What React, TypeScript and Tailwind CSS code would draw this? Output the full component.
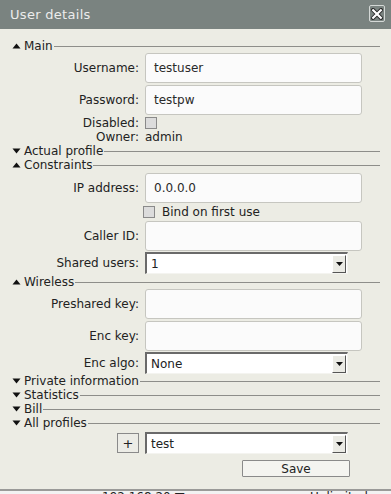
import type { ReactNode } from "react";

function Tri({ open }: { open: boolean }) {
  return open ? (
    <svg width="9" height="6" viewBox="0 0 9 6" className="shrink-0">
      <polygon points="0.5,5.5 4.5,0.5 8.5,5.5" fill="#111" />
    </svg>
  ) : (
    <svg width="9" height="6" viewBox="0 0 9 6" className="shrink-0">
      <polygon points="0.5,0.5 8.5,0.5 4.5,5.5" fill="#111" />
    </svg>
  );
}

function Section({ title, open }: { title: string; open: boolean }) {
  return (
    <div className="flex h-[14px] items-center pl-3 pr-[11px]">
      <Tri open={open} />
      <span className="ml-[3px] leading-none">{title}</span>
      <div className="ml-[1px] h-0 flex-1 border-t border-[#8e8e8a]" />
    </div>
  );
}

function Row({ label, children, h = "h-[30px]" }: { label: string; children: ReactNode; h?: string }) {
  return (
    <div className={`flex items-center ${h}`}>
      <div className="w-[139px] shrink-0 text-right leading-none">{label}</div>
      <div className="ml-[6px] flex h-full items-center">{children}</div>
    </div>
  );
}

function Input({ value }: { value?: string }) {
  return (
    <div className="flex h-full w-[217px] items-center rounded-[3px] border border-[#c6c6c0] bg-[#fbfbfb] pl-2 text-[#2a2a2a]">
      {value}
    </div>
  );
}

function Select({ value, w = "w-[203px]" }: { value: string; w?: string }) {
  return (
    <div className={`flex h-[22px] ${w} items-center border-t-2 border-l-2 border-t-[#6a6a6a] border-l-[#6a6a6a] border-b border-r border-b-[#f4f4f0] border-r-[#f4f4f0] bg-white`}>
      <span className="flex-1 pl-[4px] leading-none">{value}</span>
      <div className="mr-[1px] flex h-[18px] w-[14px] items-center justify-center border-t border-l border-t-white border-l-white border-b border-r border-b-[#555] border-r-[#555] bg-[#ebebe5]">
        <svg width="7" height="4" viewBox="0 0 7 4">
          <polygon points="0,0 7,0 3.5,4" fill="#111" />
        </svg>
      </div>
    </div>
  );
}

function Check() {
  return <div className="h-[12px] w-[12px] border border-[#8a8a8a] bg-[#dcdcdc]" />;
}

export default function App() {
  return (
    <div className="flex h-[494px] w-[391px] flex-col overflow-hidden bg-[#ecece4] font-['DejaVu_Sans',sans-serif] text-[12px] text-[#222]">
      <div className="flex h-[29px] shrink-0 items-center justify-between bg-[#7a8380] pl-[10px] pr-[6px]">
        <span className="text-[13px] tracking-[0.3px] text-[#ececec]">User details</span>
        <div className="mb-[2px] flex h-[17px] w-[16px] items-center justify-center rounded-[2px] border border-[#d4d8d6]">
          <svg width="12" height="12" viewBox="0 0 12 12">
            <path d="M2 2 L10 10 M10 2 L2 10" stroke="#2a2a2a" strokeWidth="4" strokeLinecap="square" />
            <path d="M2.2 2.2 L9.8 9.8 M9.8 2.2 L2.2 9.8" stroke="#fff" strokeWidth="2.2" strokeLinecap="square" />
          </svg>
        </div>
      </div>

      <div className="flex flex-1 flex-col">
        <div className="mt-[10px]">
          <Section title="Main" open />
        </div>
        <Row label="Username:">
          <Input value="testuser" />
        </Row>
        <div className="mt-[2px]">
          <Row label="Password:">
            <Input value="testpw" />
          </Row>
        </div>
        <div className="mt-[1px]">
          <Row label="Disabled:" h="h-[14px]">
            <Check />
          </Row>
        </div>
        <Row label="Owner:" h="h-[14px]">
          <span className="leading-none">admin</span>
        </Row>
        <Section title="Actual profile" open={false} />
        <Section title="Constraints" open />
        <div className="mt-[1px]">
          <Row label="IP address:">
            <Input value="0.0.0.0" />
          </Row>
        </div>
        <div className="mt-[2px] flex h-[14px] items-center pl-[143px]">
          <Check />
          <span className="ml-[7px] leading-none">Bind on first use</span>
        </div>
        <div className="mt-[2px]">
          <Row label="Caller ID:">
            <Input />
          </Row>
        </div>
        <div className="mt-[1px]">
          <Row label="Shared users:" h="h-[22px]">
            <Select value="1" />
          </Row>
        </div>
        <div className="mt-[1px]">
          <Section title="Wireless" open />
        </div>
        <Row label="Preshared key:">
          <Input />
        </Row>
        <div className="mt-[2px]">
          <Row label="Enc key:">
            <Input />
          </Row>
        </div>
        <div className="mt-[1px]">
          <Row label="Enc algo:" h="h-[22px]">
            <Select value="None" />
          </Row>
        </div>
        <Section title="Private information" open={false} />
        <Section title="Statistics" open={false} />
        <Section title="Bill" open={false} />
        <Section title="All profiles" open={false} />
        <div className="mt-[2px] flex h-[22px] items-center">
          <div className="ml-[117px] flex h-[20px] w-[22px] items-center justify-center border border-[#8a8a8a] bg-[#ecece6] text-[13px] leading-none">
            +
          </div>
          <div className="ml-[6px]">
            <Select value="test" />
          </div>
        </div>
        <div className="mt-[6px] flex">
          <div className="ml-[242px] flex h-[17px] w-[108px] items-center justify-center rounded-[1px] border border-[#8a8a8a] bg-[#f4f4f0] leading-none">
            Save
          </div>
        </div>
      </div>

      <div className="h-[2px] shrink-0 bg-[#9a9a98]" />
      <div className="h-[3px] shrink-0 overflow-hidden bg-[#f2f2f2]">
        <div className="flex text-[12px] leading-[12px] text-[#222]">
          <span className="ml-[102px] w-[72px] shrink-0 whitespace-nowrap">192.168.20</span>
          <span className="w-[136px] shrink-0">&#9632;</span>
          <span className="whitespace-nowrap">Unlimited</span>
        </div>
      </div>
    </div>
  );
}
